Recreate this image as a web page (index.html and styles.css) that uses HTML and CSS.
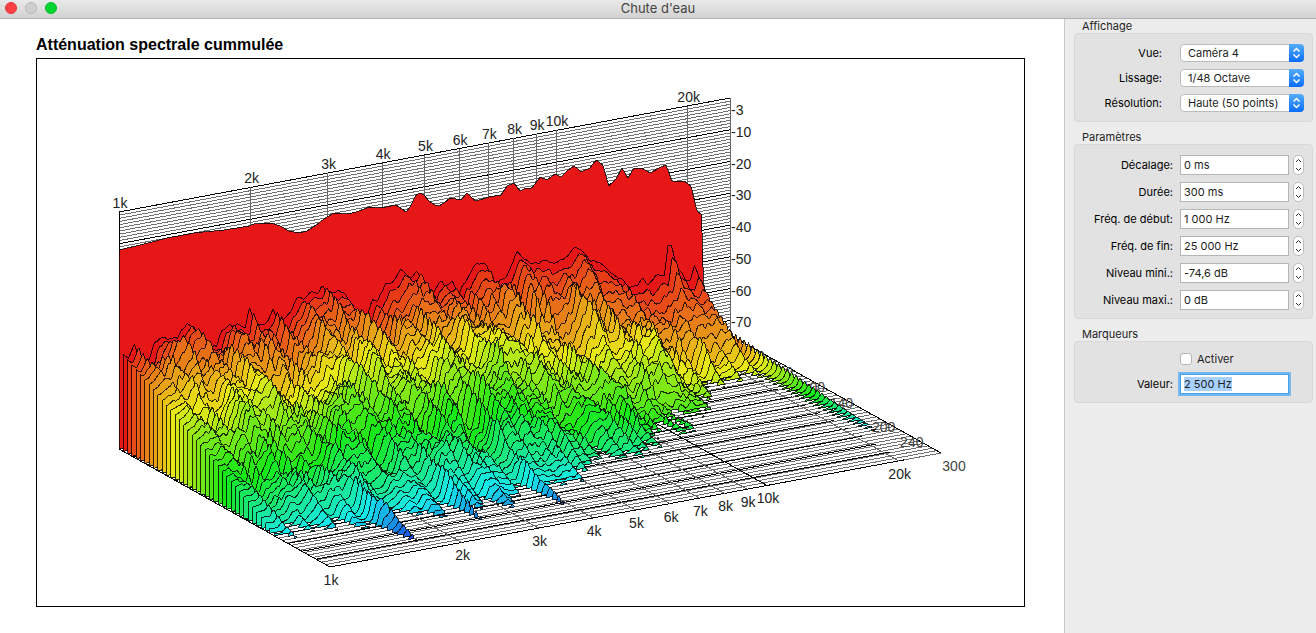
FILE: index.html
```html
<!DOCTYPE html>
<html lang="fr">
<head>
    <meta charset="utf-8">
    <title>Chute d'eau</title>
    <link rel="stylesheet" href="styles.css">
</head>
<body>
    <header class="titlebar">
        <div class="lights">
            <button type="button" class="light red" aria-label="Fermer"></button>
            <button type="button" class="light grey" aria-label="Réduire"></button>
            <button type="button" class="light green" aria-label="Agrandir"></button>
        </div>
        <h1>Chute d'eau</h1>
    </header>

    <div class="content">
        <main>
            <h2>Atténuation spectrale cummulée</h2>
            <div class="frame">
                <svg id="waterfall" viewBox="38 60 987 547" preserveAspectRatio="xMinYMin meet"></svg>
            </div>
        </main>

        <aside>
            <h3>Affichage</h3>
            <form class="group view">
                <label for="vue">Vue:</label>
                <span class="popup">
                    <select id="vue"><option>Caméra 4</option></select>
                    <svg viewBox="0 0 15 18"><path d="M4.500 7.500l3-3 3 3M4.500 10.500l3 3 3-3"/></svg>
                </span>
                <label for="lissage">Lissage:</label>
                <span class="popup">
                    <select id="lissage"><option>1/48 Octave</option></select>
                    <svg viewBox="0 0 15 18"><path d="M4.500 7.500l3-3 3 3M4.500 10.500l3 3 3-3"/></svg>
                </span>
                <label for="resolution">Résolution:</label>
                <span class="popup">
                    <select id="resolution"><option>Haute (50 points)</option></select>
                    <svg viewBox="0 0 15 18"><path d="M4.500 7.500l3-3 3 3M4.500 10.500l3 3 3-3"/></svg>
                </span>
            </form>

            <h3>Paramètres</h3>
            <form class="group params">
                <label for="decalage">Décalage:</label>
                <input type="text" id="decalage" value="0 ms">
                <span class="stepper"></span>
                <label for="duree">Durée:</label>
                <input type="text" id="duree" value="300 ms">
                <span class="stepper"></span>
                <label for="debut">Fréq. de début:</label>
                <input type="text" id="debut" value="1 000 Hz">
                <span class="stepper"></span>
                <label for="fin">Fréq. de fin:</label>
                <input type="text" id="fin" value="25 000 Hz">
                <span class="stepper"></span>
                <label for="mini">Niveau mini.:</label>
                <input type="text" id="mini" value="-74,6 dB">
                <span class="stepper"></span>
                <label for="maxi">Niveau maxi.:</label>
                <input type="text" id="maxi" value="0 dB">
                <span class="stepper"></span>
            </form>

            <h3>Marqueurs</h3>
            <form class="group markers">
                <div class="check">
                    <input type="checkbox" id="activer">
                    <label for="activer">Activer</label>
                </div>
                <label for="valeur">Valeur:</label>
                <input type="text" id="valeur" class="active" value="2 500 Hz">
            </form>
        </aside>
    </div>
    <script src="waterfall.js"></script>
</body>
</html>
```
FILE: styles.css
```css
* {
    box-sizing: border-box;
}
body {
    margin: 0;
    min-height: 100vh;
    display: flex;
    flex-direction: column;
    background: #fff;
    color: #1e1e1e;
    font: 11px/14px Inter, "Liberation Sans", sans-serif;
}
h1, h2, h3 {
    margin: 0;
}

.titlebar {
    display: grid;
    grid-template-columns: 1fr auto 1fr;
    height: 19px;
    padding: 0 5px;
    background: linear-gradient(#e9e9e9, #d2d2d2);
    border-bottom: 1px solid #b1b1b1;
}
.titlebar h1 {
    font-size: 13px;
    font-weight: 400;
    line-height: 17px;
    color: #444;
}
.lights {
    display: flex;
    gap: 8px;
    padding-top: 2px;
}
.light {
    width: 12px;
    height: 12px;
    padding: 0;
    border: 1px solid;
    border-radius: 50%;
}
.red {
    background: #ff4146;
    border-color: #e0353c;
}
.grey {
    background: #cfcfcf;
    border-color: #b8b8b8;
}
.green {
    background: #00d62f;
    border-color: #00bb24;
}

.content {
    flex: 1;
    display: flex;
}
main {
    flex: 1;
    display: flex;
    flex-direction: column;
    padding: 16px 39px 26px 36px;
}
main h2 {
    font: bold 16px/20px "Liberation Sans", Arial, sans-serif;
    color: #000;
    padding-bottom: 3px;
}
.frame {
    flex: 1;
    border: 1px solid #000;
}
.frame svg {
    display: block;
    width: 100%;
}

/* waterfall plot */
.frame line, .frame path {
    shape-rendering: crispEdges;
}
.fine {
    stroke: #707070;
}
.strong {
    stroke: #000;
}
.decade {
    stroke: #666;
}
.slice {
    stroke: rgba(0, 0, 0, 0.8);
    stroke-linejoin: round;
}
.frame text {
    font: 14px "Liberation Sans", Arial, sans-serif;
    fill: #222;
    text-anchor: middle;
}
.frame .time {
    fill: #444;
}
.frame .level {
    text-anchor: start;
}

aside {
    width: 252px;
    padding: 0 3px 0 9px;
    background: #ececec;
    border-left: 1px solid #c8c8c8;
}
aside h3 {
    padding-left: 8px;
    font-size: 11px;
    font-weight: 400;
}
.group {
    display: grid;
    align-items: center;
    margin-bottom: 8px;
    padding: 10px 8px 9px;
    background: #e2e2e2;
    border: 1px solid #d8d8d8;
    border-radius: 4px;
}
.group > label {
    text-align: right;
    color: #000;
}
.view {
    grid-template-columns: 79px 1fr;
    gap: 7px 18px;
}
.params {
    grid-template-columns: 93px 1fr 11px;
    gap: 7px 4px;
    padding-bottom: 8px;
}
.params > label, .markers > label {
    margin-right: 3px;
}
.markers {
    grid-template-columns: 93px 109px;
    gap: 8px 4px;
    padding-bottom: 8px;
}

.popup {
    position: relative;
    height: 18px;
}
.popup svg {
    position: absolute;
    top: 0;
    right: 0;
    width: 15px;
    height: 18px;
    border-radius: 0 4px 4px 0;
    background: linear-gradient(#55adfa, #0a6dfb);
    pointer-events: none;
}
.popup path {
    fill: none;
    stroke: #fff;
    stroke-width: 1.5;
}
select {
    appearance: none;
    display: block;
    width: 100%;
    height: 18px;
    padding: 0 7px;
    border: 1px solid #bcbcbc;
    border-radius: 4px;
    background: #fff;
    color: #1e1e1e;
    font: inherit;
}
input[type="text"] {
    width: 100%;
    height: 20px;
    padding: 0 3px;
    border: 1px solid #b5b5b5;
    background: #fff;
    color: #1e1e1e;
    font: inherit;
    outline: none;
}
input[type="text"].active {
    border-color: #4a9fe0;
    box-shadow: 0 0 0 2px #72b8f2;
}
input::selection {
    background: #a8d1ff;
    color: #1e1e1e;
}
.stepper {
    display: flex;
    flex-direction: column;
    height: 20px;
    border: 1px solid #bdbdbd;
    border-radius: 5px;
    background: #fff;
    overflow: hidden;
}
.stepper button {
    flex: 1;
    display: flex;
    align-items: center;
    justify-content: center;
    padding: 0;
    border: 0;
    background: none;
}
.stepper svg {
    width: 7px;
    height: 5px;
    fill: none;
    stroke: #333;
}
.check {
    grid-column: 2;
    display: flex;
    align-items: center;
    gap: 5px;
    height: 14px;
}
.check input {
    appearance: none;
    width: 12px;
    height: 12px;
    margin: 0;
    border: 1px solid #b5b5b5;
    border-radius: 3px;
    background: #fff;
}
```
FILE: waterfall.js
```js
const svg = document.getElementById('waterfall');
const NS = 'http://www.w3.org/2000/svg';
const SLICES = 50;
const RANGE = 74.6;

// floor position for a frequency f and a time t, both 0..1
const px = (f, t) => 120 + 611 * f + 211 * t;
const py = (f, t) => 450 - 114 * f + 118 * t;
const logf = hz => Math.log(hz / 1000) / Math.log(25);

function add(tag, attrs, text) {
    const el = document.createElementNS(NS, tag);
    for (const name in attrs) el.setAttribute(name, attrs[name]);
    if (text !== undefined) el.textContent = text;
    svg.appendChild(el);
}

function line(x1, y1, x2, y2, cls) {
    add('line', { x1, y1, x2, y2, class: cls });
}

function interp(points, x) {
    if (x <= points[0][0]) return points[0][1];
    for (let i = 1; i < points.length; i++) {
        const [x0, y0] = points[i - 1];
        const [x1, y1] = points[i];
        if (x <= x1) return y0 + (y1 - y0) * (x - x0) / (x1 - x0 || 1);
    }
    return points[points.length - 1][1];
}

function hash(i, j) {
    let n = Math.imul(i, 374761393) + Math.imul(j, 668265263);
    n = Math.imul(n ^ (n >>> 13), 1274126177);
    return ((n ^ (n >>> 16)) >>> 0) / 4294967295 * 2 - 1;
}

function noise(x, y) {
    const i = Math.floor(x), j = Math.floor(y);
    let u = x - i, v = y - j;
    u = u * u * (3 - 2 * u);
    v = v * v * (3 - 2 * v);
    const a = hash(i, j) + (hash(i + 1, j) - hash(i, j)) * u;
    const b = hash(i, j + 1) + (hash(i + 1, j + 1) - hash(i, j + 1)) * u;
    return a + (b - a) * v;
}

// first response, the big red curve
const direct = [
    [120, 250], [145, 244], [168, 238], [195, 233], [225, 230], [250, 226], [255, 224], [273, 223],
    [281, 226], [290, 231], [300, 233], [308, 231], [317, 225], [325, 219], [335, 213], [350, 214], [360, 211],
    [370, 207], [382, 208], [397, 205], [403, 209], [407, 212], [411, 207], [417, 195], [421, 193], [425, 195],
    [430, 201], [436, 205], [440, 206], [445, 203], [451, 198], [462, 200], [468, 193], [473, 198], [477, 201], [490, 197],
    [502, 195], [508, 186], [515, 183], [521, 191], [527, 188], [533, 188], [541, 177], [548, 180],
    [556, 174], [562, 177], [569, 170], [575, 166], [579, 169], [582, 172], [591, 168], [597, 160], [604, 165],
    [608, 180], [610, 186], [617, 179], [623, 168], [629, 178], [635, 168], [643, 168], [651, 173], [660, 168],
    [667, 165], [673, 181], [685, 181], [692, 186], [698, 211], [703, 215], [704, 282], [706, 288],
    [708, 315], [714, 325], [731, 335]
];

// skyline of the early decay
const early = [
    [124, 353], [131, 356], [137, 342], [142, 355], [150, 356], [156, 342], [168, 333], [180, 338], [187, 330],
    [197, 323], [203, 330], [210, 335], [219, 350], [225, 330], [240, 322], [248, 326], [252, 307], [258, 327],
    [270, 325], [276, 307], [281, 322], [292, 306], [300, 295], [305, 298], [312, 292], [325, 288], [330, 295],
    [336, 285], [342, 286], [352, 300], [360, 318], [368, 315], [375, 294], [380, 295], [387, 283], [395, 280],
    [403, 272], [411, 278], [418, 277], [427, 285], [435, 297], [445, 283], [455, 280], [462, 291], [470, 275],
    [480, 260], [490, 265], [497, 287], [510, 275], [520, 252], [527, 257], [535, 264], [543, 258], [550, 255],
    [565, 253], [577, 244], [590, 252], [605, 264], [620, 273], [632, 285], [640, 280], [645, 270], [650, 280],
    [658, 272], [667, 274], [671, 238], [674, 238], [679, 260], [688, 273], [693, 272], [697, 257], [703, 275],
    [708, 298], [714, 310], [722, 335]
];

// time at which every frequency sinks below the floor
const end = [
    [0, 0.74], [0.01, 0.76], [0.043, 0.72], [0.098, 0.77], [0.14, 0.77], [0.163, 0.92], [0.178, 0.77],
    [0.199, 0.75], [0.229, 0.8], [0.27, 0.78], [0.288, 0.87], [0.3, 0.78], [0.342, 0.77], [0.355, 0.87],
    [0.37, 0.76], [0.41, 0.76], [0.424, 0.87], [0.436, 0.76], [0.47, 0.76], [0.487, 0.8], [0.51, 0.71],
    [0.551, 0.66], [0.594, 0.65], [0.632, 0.69], [0.66, 0.64], [0.707, 0.6], [0.769, 0.5], [0.812, 0.45],
    [0.862, 0.34], [0.904, 0.28], [0.94, 0.33], [0.955, 0.22], [0.965, 0.06], [1, 0.01]
];

// the high end decays as a straight slope, then faster
const slope = [[0, 0.95], [0.5, 1], [0.68, 1.5], [0.85, 1.5], [1, 1.3]];

const tail = [[0.94, 0], [0.952, 0.15], [0.961, 0.4], [0.967, 1], [0.971, 0.5], [0.976, 0]];

const skyline = f => Math.max(0, 453 - 114 * f - interp(early, px(f, 0) + 6));

function smoothSkyline(f) {
    let sum = 0;
    for (let i = -4; i <= 4; i++) sum += skyline(Math.max(0, f + i * 0.009));
    return sum / 9;
}

function height(f, k) {
    const t = k / (SLICES - 1);
    if (k === 0) return 449 - 114 * f - interp(direct, px(f, 0));
    const life = interp(end, f) + (f < 0.95 ? 0.05 * noise(f * 90, 3) : 0);
    const r = 1 - t / life;
    const fade = Math.max(0, 1 - t / 0.8);
    const fin = interp(tail, f) * 23 * Math.pow(fade, 0.9);
    let h = 0;
    if (r > 0) {
        const edge = f > 0.9 ? Math.max(0, 1 - (f - 0.9) * 16) : 1;
        const rough = Math.min(1, 0.15 + t * 8) * Math.min(1, r * 3) * Math.min(1, f * 30) * edge;
        const smooth = smoothSkyline(f);
        // sharp peaks of the skyline die away faster than the rest
        h = (smooth + (skyline(f) - smooth) * Math.exp(-Math.max(0, t - 0.05) * 7)) * Math.pow(r, interp(slope, f));
        const ridge = 1 - 2 * Math.abs(noise(f * 30 + 5, t * 4 + 7));
        h += rough * (11 * ridge + 13 * noise(f * 58, t * 7) + 11 * noise(f * 110 + 9, t * 14 + 40)
            + 6 * noise(f * 200, t * 28) - 3);
    }
    return Math.max(0, h, fin);
}

// back wall
for (let db = 0; db <= RANGE; db++) {
    const y = 213 + db * 237 / RANGE;
    line(120, y, 731, y - 114, db % 10 ? 'fine' : 'strong');
}
const marks = [1, 2, 3, 4, 5, 6, 7, 8, 9, 10, 20];
for (const m of marks) {
    const f = logf(m * 1000);
    line(px(f, 0), py(f, 0), px(f, 0), py(f, 0) - 237, m === 1 ? 'strong' : 'decade');
}
line(731, 99, 731, 336, 'decade');

// floor
for (let k = 0; k < SLICES; k++) {
    const t = k / (SLICES - 1);
    line(px(0, t), py(0, t), px(1, t), py(1, t), 'fine');
}
for (let ms = 0; ms <= 300; ms += 20) {
    const t = ms / 300;
    line(px(0, t), py(0, t), px(0.94, t), py(0.94, t), 'strong');
}
for (const m of marks) {
    const f = logf(m * 1000);
    line(px(f, 0), py(f, 0), px(f, 1), py(f, 1), m === 1 || m === 10 ? 'strong' : 'decade');
}
line(px(1, 0), py(1, 0), px(1, 1), py(1, 1), 'strong');

for (const ms of [20, 60, 100, 140, 200, 240, 300]) {
    add('text', { x: px(1, ms / 300) + 13, y: py(1, ms / 300) + 18, class: 'time' }, ms);
}

// slices, back to front
const STEPS = 600;
for (let k = 0; k < SLICES; k++) {
    const t = k / (SLICES - 1);
    let d = '', run = [];
    const flush = () => {
        if (run.length > 1) {
            const a = run[0], b = run[run.length - 1];
            d += `M${px(a[0], t).toFixed(1)} ${py(a[0], t).toFixed(1)}`;
            for (const [f, h] of run) d += `L${px(f, t).toFixed(1)} ${(py(f, t) - h).toFixed(1)}`;
            d += `L${px(b[0], t).toFixed(1)} ${py(b[0], t).toFixed(1)}Z`;
        }
        run = [];
    };
    for (let i = 0; i <= STEPS; i++) {
        const f = i / STEPS;
        const h = height(f, k);
        if (h > 0.6) run.push([f, h]);
        else flush();
    }
    flush();
    const hue = k < 2 ? 0 : Math.round(245 * t);
    if (d) add('path', { d, class: 'slice', fill: `hsl(${hue}, 82%, 50%)` });
}

// scales
for (const m of marks) {
    const f = logf(m * 1000);
    add('text', { x: px(f, 0) + 1, y: py(f, 0) - 237 - 4 }, m + 'k');
    add('text', { x: px(f, 1) + 1, y: py(f, 1) + 18 }, m + 'k');
}
for (const db of [3, 10, 20, 30, 40, 50, 60, 70]) {
    add('text', { x: 732, y: 106 + db * 237 / RANGE, class: 'level' }, '-' + db);
}

// stepper arrows
document.querySelectorAll('.stepper').forEach(stepper => {
    stepper.innerHTML = `
        <button type="button" aria-label="Augmenter"><svg viewBox="0 0 7 5"><path d="M1 4l2.500-2.500 2.500 2.500"/></svg></button>
        <button type="button" aria-label="Diminuer"><svg viewBox="0 0 7 5"><path d="M1 1l2.500 2.500 2.500-2.500"/></svg></button>
    `;
});

const valeur = document.getElementById('valeur');
valeur.focus();
valeur.select();
```
